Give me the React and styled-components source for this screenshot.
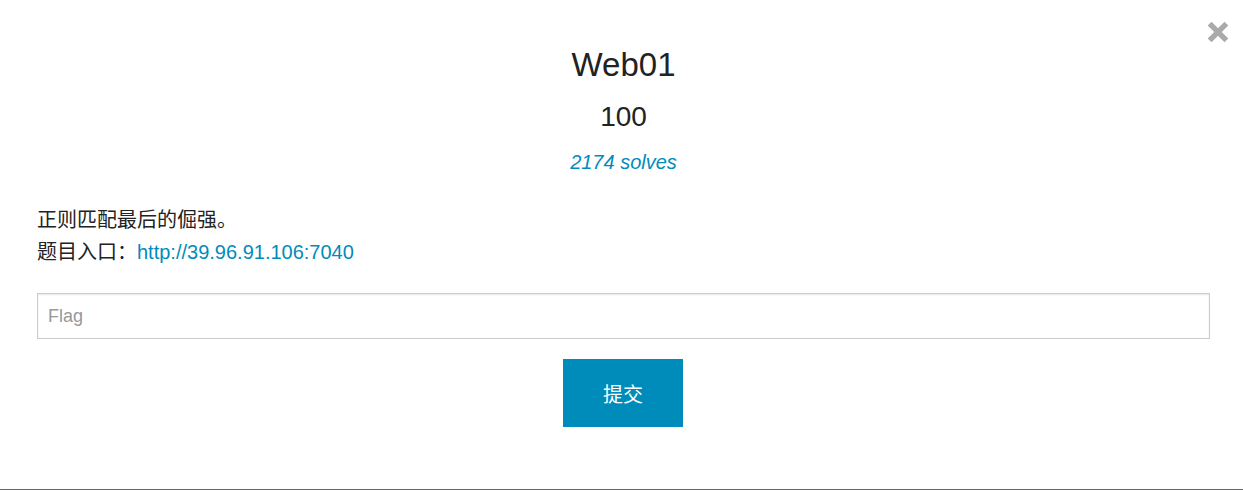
import React, { useState } from 'react';
import styled, { createGlobalStyle } from 'styled-components';

const GlobalStyle = createGlobalStyle`
  html, body {
    margin: 0;
    padding: 0;
    background: #fff;
  }
  body {
    font-family: "Liberation Sans", "Noto Sans CJK SC", Arial, sans-serif;
    color: #222;
  }
  * { box-sizing: border-box; }
`;

const Modal = styled.div`
  position: relative;
  width: 1243px;
  height: 490px;
  padding: 45px 33px 0 37px;
  border-bottom: 1px solid #666;
  background: #fff;
`;

const CloseButton = styled.a`
  position: absolute;
  top: 21px;
  right: 14px;
  width: 22px;
  height: 22px;
  display: block;
  cursor: pointer;
  line-height: 0;
`;

const Title = styled.h2`
  margin: 0;
  text-align: center;
  font-size: 33px;
  line-height: 40px;
  font-weight: normal;
  color: #222;
`;

const Points = styled.h3`
  margin: 14px 0 0;
  text-align: center;
  font-size: 28px;
  line-height: 36px;
  font-weight: normal;
  color: #222;
`;

const Solves = styled.p`
  margin: 13px 0 0;
  text-align: center;
  font-size: 20px;
  line-height: 28px;
  font-style: italic;
  color: #008cba;
`;

const Description = styled.div`
  margin-top: 28px;
  font-size: 20px;
  line-height: 32px;
  color: #222;
`;

const Line = styled.p`
  margin: 0;
`;

const Link = styled.a`
  color: #008cba;
  text-decoration: none;
`;

const Form = styled.form`
  margin-top: 25px;
  display: flex;
  flex-direction: column;
  align-items: center;
  gap: 20px;
`;

const FlagInput = styled.input`
  width: 100%;
  height: 46px;
  padding: 0 10px;
  border: 1px solid #ccc;
  box-shadow: inset 0 1px 2px rgba(0, 0, 0, 0.1);
  font-family: "Liberation Sans", "Noto Sans CJK SC", Arial, sans-serif;
  font-size: 18px;
  color: #222;
  outline: none;
  &::placeholder {
    color: #999;
  }
`;

const SubmitButton = styled.button`
  width: 120px;
  height: 68px;
  margin-right: 1px;
  border: none;
  background: #008cba;
  color: #fff;
  font-family: "Liberation Sans", "Noto Sans CJK SC", Arial, sans-serif;
  font-size: 20px;
  cursor: pointer;
`;

export default function App() {
  const [flag, setFlag] = useState('');

  return (
    <>
      <GlobalStyle />
      <Modal>
        <CloseButton aria-label="close">
          <svg width="22" height="22" viewBox="0 0 22 22">
            <path d="M2.6 2.6 L19.4 19.4 M19.4 2.6 L2.6 19.4" stroke="#aaa" strokeWidth="5.4" fill="none" />
          </svg>
        </CloseButton>
        <Title>Web01</Title>
        <Points>100</Points>
        <Solves>2174 solves</Solves>
        <Description>
          <Line>正则匹配最后的倔强。</Line>
          <Line>
            题目入口：<Link href="#">http://39.96.91.106:7040</Link>
          </Line>
        </Description>
        <Form onSubmit={(e) => e.preventDefault()}>
          <FlagInput
            type="text"
            placeholder="Flag"
            value={flag}
            onChange={(e) => setFlag(e.target.value)}
          />
          <SubmitButton type="submit">提交</SubmitButton>
        </Form>
      </Modal>
    </>
  );
}
